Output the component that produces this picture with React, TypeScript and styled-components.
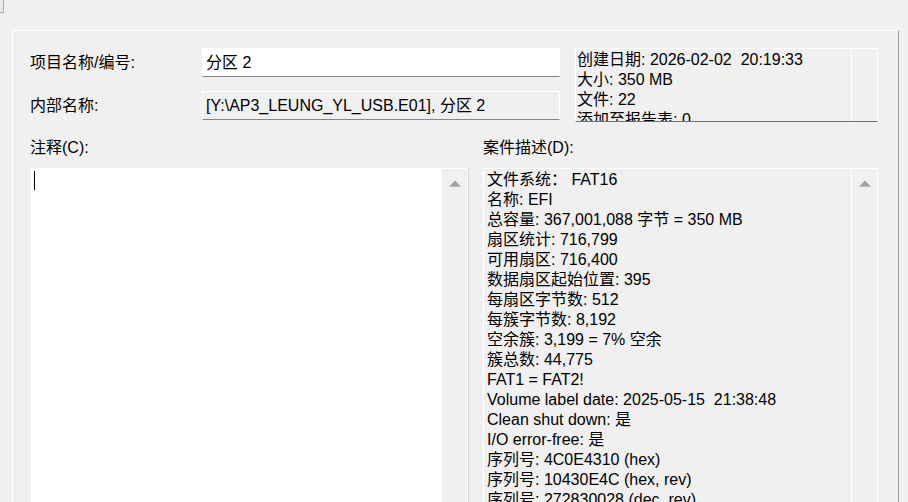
import React from "react"
import styled, { createGlobalStyle } from "styled-components"

const GlobalStyle = createGlobalStyle`
  html, body {
    margin: 0;
    padding: 0;
    background: #f0f0f0;
    overflow: hidden;
  }
  body {
    font-family: "Liberation Sans", "Noto Sans CJK SC", sans-serif;
    font-size: 16px;
    color: #000;
  }
`

const infoLines = [
  "创建日期: 2026-02-02  20:19:33",
  "大小: 350 MB",
  "文件: 22",
  "添加至报告表: 0",
]

const descLines = [
  "文件系统： FAT16",
  "名称: EFI",
  "总容量: 367,001,088 字节 = 350 MB",
  "扇区统计: 716,799",
  "可用扇区: 716,400",
  "数据扇区起始位置: 395",
  "每扇区字节数: 512",
  "每簇字节数: 8,192",
  "空余簇: 3,199 = 7% 空余",
  "簇总数: 44,775",
  "FAT1 = FAT2!",
  "Volume label date: 2025-05-15  21:38:48",
  "Clean shut down: 是",
  "I/O error-free: 是",
  "序列号: 4C0E4310 (hex)",
  "序列号: 10430E4C (hex, rev)",
  "序列号: 272830028 (dec, rev)",
]

const UpArrow = () => (
  <svg width="12" height="7" viewBox="0 0 12 7">
    <path
      d="M6 0.8 L11.2 6.3 L0.8 6.3 Z"
      fill="#a3a3a3"
      stroke="#a3a3a3"
      strokeWidth="0.8"
      strokeLinejoin="round"
    />
  </svg>
)

export default function App() {
  return (
    <Window>
      <GlobalStyle />
      <TabStub />
      <Page>
        <HeaderGrid>
          <FieldLabel>项目名称/编号:</FieldLabel>
          <Edit>分区 2</Edit>
          <InfoBox>
            <BoxText>
              {infoLines.map((line) => (
                <Line key={line}>{line}</Line>
              ))}
            </BoxText>
            <ScrollTrack />
          </InfoBox>
          <FieldLabel>内部名称:</FieldLabel>
          <Edit $readOnly>[Y:\AP3_LEUNG_YL_USB.E01], 分区 2</Edit>
        </HeaderGrid>

        <Columns>
          <Column>
            <FieldLabel>注释(C):</FieldLabel>
            <CommentBox>
              <CommentArea>
                <Caret />
              </CommentArea>
              <CommentTrack>
                <UpArrow />
              </CommentTrack>
            </CommentBox>
          </Column>
          <Column>
            <FieldLabel>案件描述(D):</FieldLabel>
            <DescBox>
              <BoxText $padX={3}>
                {descLines.map((line) => (
                  <Line key={line}>{line}</Line>
                ))}
              </BoxText>
              <ScrollTrack>
                <UpArrow />
              </ScrollTrack>
            </DescBox>
          </Column>
        </Columns>
      </Page>
    </Window>
  )
}

const Window = styled.div`
  width: 908px;
  height: 502px;
  overflow: hidden;
  background: #f0f0f0;
`

const TabStub = styled.div`
  box-sizing: border-box;
  width: 4px;
  height: 13px;
  background: #e9e9e9;
  border-right: 1px solid #adadad;
  border-bottom: 1px solid #adadad;
`

const Page = styled.section`
  box-sizing: border-box;
  margin: 17px 0 0 12px;
  width: 887px;
  height: 500px;
  border-left: 1px solid #fff;
  border-top: 1px solid #fff;
  border-right: 1px solid #a0a0a0;
  padding: 17px 20px 0 17px;
`

const HeaderGrid = styled.div`
  display: grid;
  grid-template-columns: 157px 358px 1fr;
  grid-template-rows: 29px 29px;
  column-gap: 15px;
  row-gap: 14px;
  align-items: center;
`

const FieldLabel = styled.div`
  line-height: 20px;
  white-space: nowrap;
`

const Edit = styled.div<{ $readOnly?: boolean }>`
  box-sizing: border-box;
  height: 29px;
  display: flex;
  align-items: center;
  padding: 0 3px;
  background: ${(p) => (p.$readOnly ? "#f0f0f0" : "#fff")};
  border: 1px solid #fff;
  border-bottom-color: #858585;
  white-space: pre;
  line-height: 20px;
`

const InfoBox = styled.div`
  grid-column: 3;
  grid-row: 1 / span 2;
  align-self: start;
  box-sizing: border-box;
  height: 74px;
  display: flex;
  overflow: hidden;
  background: #f0f0f0;
  border: 1px solid #fff;
  border-bottom-color: #6f6f6f;
`

const BoxText = styled.div<{ $padX?: number }>`
  flex: 1;
  min-width: 0;
  padding: 1px ${(p) => p.$padX ?? 1}px 0;
  overflow: hidden;
`

const Line = styled.div`
  line-height: 20px;
  height: 20px;
  white-space: pre;
`

const ScrollTrack = styled.div`
  width: 25px;
  flex-shrink: 0;
  border-left: 1px solid #fff;
  display: flex;
  justify-content: center;
  align-items: flex-start;
  padding-top: 11px;
  box-sizing: content-box;
`

const Columns = styled.div`
  display: grid;
  grid-template-columns: 438px 1fr;
  column-gap: 15px;
  margin-top: 18px;
`

const Column = styled.div`
  display: flex;
  flex-direction: column;
  gap: 10px;
`

const CommentBox = styled.div`
  box-sizing: border-box;
  margin-left: 1px;
  height: 360px;
  display: flex;
  background: #f0f0f0;
  border: 1px solid #fff;
  border-right-color: #fff;
  box-shadow: 1px 0 0 #dadada;
`

const CommentArea = styled.div`
  flex: 1;
  background: #fff;
  padding: 1px 2px;
`

const Caret = styled.div`
  width: 1px;
  height: 19px;
  margin-top: 1px;
  background: #000;
`

const CommentTrack = styled.div`
  width: 25px;
  flex-shrink: 0;
  display: flex;
  justify-content: center;
  align-items: flex-start;
  padding-top: 11px;
`

const DescBox = styled.div`
  box-sizing: border-box;
  height: 360px;
  display: flex;
  overflow: hidden;
  background: #f0f0f0;
  border: 1px solid #fff;
`
